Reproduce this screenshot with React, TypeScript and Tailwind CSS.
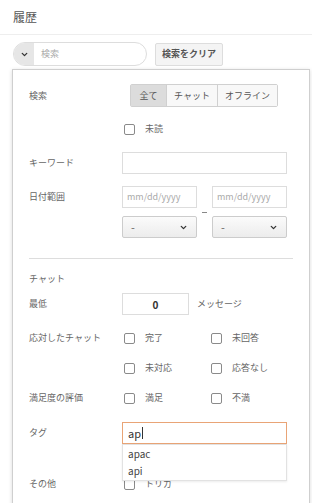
import { ChevronDown } from "lucide-react";

const font = "font-['Noto_Sans_CJK_JP','Noto_Sans',sans-serif]";

function Label({ children }: { children?: React.ReactNode }) {
  return <div className="w-[93px] shrink-0 text-[9px] text-[#666]">{children}</div>;
}

function Check({ label, w }: { label: string; w?: string }) {
  return (
    <div className={`flex items-center ${w ?? ""}`}>
      <span className="w-[11px] h-[11px] border border-[#8a8a8a] rounded-[2px] bg-white ml-[2px]" />
      <span className="ml-[10px] text-[9px] text-[#666]">{label}</span>
    </div>
  );
}

function Select() {
  return (
    <div className="w-[75px] h-[22px] border border-[#ccc] rounded-[2px] bg-gradient-to-b from-[#fbfbfb] to-[#ececec] flex items-center justify-between px-[8px] text-[11px] text-[#666]">
      <span>-</span>
      <ChevronDown className="w-[9px] h-[9px] text-[#333]" strokeWidth={3.5} />
    </div>
  );
}

export default function App() {
  return (
    <div className={`w-[312px] h-[503px] overflow-hidden bg-white ${font}`}>
      <div className="h-[35px] border-b border-[#eee] pl-[13px] flex items-center text-[12px] text-[#555]">
        履歴
      </div>

      <div className="flex items-center pl-[13px] pt-[7px]">
        <div className="flex w-[134px] h-[24px] border border-[#ddd] rounded-full overflow-hidden">
          <div className="w-[20px] bg-[#e6e6e6] flex items-center justify-center">
            <ChevronDown className="w-[9px] h-[9px] text-[#333]" strokeWidth={3.5} />
          </div>
          <div className="flex-1 flex items-center pl-[7px] text-[9px] text-[#aaa]">検索</div>
        </div>
        <button className="ml-[8px] h-[23px] px-[6px] border border-[#ddd] rounded-[2px] bg-[#f4f4f4] text-[9px] font-bold text-[#555]">
          検索をクリア
        </button>
      </div>

      <div className="relative ml-[12px] mt-[3px] w-[298px] h-[460px] border border-[#cfcfcf] shadow-[0_1px_4px_rgba(0,0,0,0.15)] bg-white pl-[16px] pt-[14px] pr-[22px]">
        <div className="flex items-center h-[23px]">
          <Label>検索</Label>
          <div className="flex ml-[8px] h-[23px] border border-[#d0d0d0] rounded-[2px] text-[9px] text-[#555]">
            <div className="w-[35px] bg-[#dcdcdc] flex items-center justify-center">全て</div>
            <div className="w-[51px] bg-[#f8f8f8] border-l border-[#d0d0d0] flex items-center justify-center">チャット</div>
            <div className="w-[60px] bg-[#f8f8f8] border-l border-[#d0d0d0] flex items-center justify-center">オフライン</div>
          </div>
        </div>

        <div className="flex items-center h-[22px] mt-[11px]">
          <Label />
          <Check label="未読" />
        </div>

        <div className="flex items-center mt-[12px]">
          <Label>キーワード</Label>
          <div className="w-[165px] h-[22px] border border-[#ddd]" />
        </div>

        <div className="flex mt-[12px]">
          <div className="h-[22px] flex items-center">
            <Label>日付範囲</Label>
          </div>
          <div className="flex flex-col gap-[8px]">
            <div className="flex gap-[15px]">
              <div className="w-[75px] h-[22px] border border-[#ddd] flex items-center pl-[4px] text-[9px] text-[#aaa]">mm/dd/yyyy</div>
              <div className="w-[75px] h-[22px] border border-[#ddd] flex items-center pl-[4px] text-[9px] text-[#aaa]">mm/dd/yyyy</div>
            </div>
            <div className="flex items-start">
              <Select />
              <div className="w-[15px] flex justify-center">
                <span className="w-[5px] h-px bg-[#888] -mt-[4px]" />
              </div>
              <Select />
            </div>
          </div>
        </div>

        <div className="mt-[20px] h-px bg-[#ddd] mr-[-6px]" />

        <div className="mt-[12px] h-[16px] flex items-center text-[9px] text-[#666]">チャット</div>

        <div className="flex items-center mt-[6px]">
          <Label>最低</Label>
          <div className="w-[67px] h-[22px] border border-[#ddd] flex items-center justify-center text-[10px] font-bold text-[#333]">0</div>
          <span className="ml-[8px] text-[9px] text-[#666]">メッセージ</span>
        </div>

        <div className="flex items-center h-[22px] mt-[12px]">
          <Label>応対したチャット</Label>
          <Check label="完了" w="w-[87px]" />
          <Check label="未回答" />
        </div>

        <div className="flex items-center h-[22px] mt-[8px]">
          <Label />
          <Check label="未対応" w="w-[87px]" />
          <Check label="応答なし" />
        </div>

        <div className="flex items-center h-[22px] mt-[8px]">
          <Label>満足度の評価</Label>
          <Check label="満足" w="w-[87px]" />
          <Check label="不満" />
        </div>

        <div className="flex items-center mt-[13px]">
          <Label>タグ</Label>
          <div className="relative w-[165px] h-[22px] border border-[#e9a476] flex items-center pl-[5px] text-[11px] text-[#333]">
            ap<span className="w-px h-[12px] bg-[#333] ml-[1px]" />
            <div className="absolute left-[-1px] top-[21px] w-[165px] bg-white border border-[#e2e2e2] shadow-[0_1px_2px_rgba(0,0,0,0.08)] z-10 pb-[1px] text-[10px] text-[#444]">
              <div className="h-[17px] flex items-center pl-[5px]">apac</div>
              <div className="h-[17px] flex items-center pl-[5px]">api</div>
            </div>
          </div>
        </div>

        <div className="flex items-center h-[22px] mt-[29px]">
          <Label>その他</Label>
          <Check label="トリガ" />
        </div>
      </div>
    </div>
  );
}
